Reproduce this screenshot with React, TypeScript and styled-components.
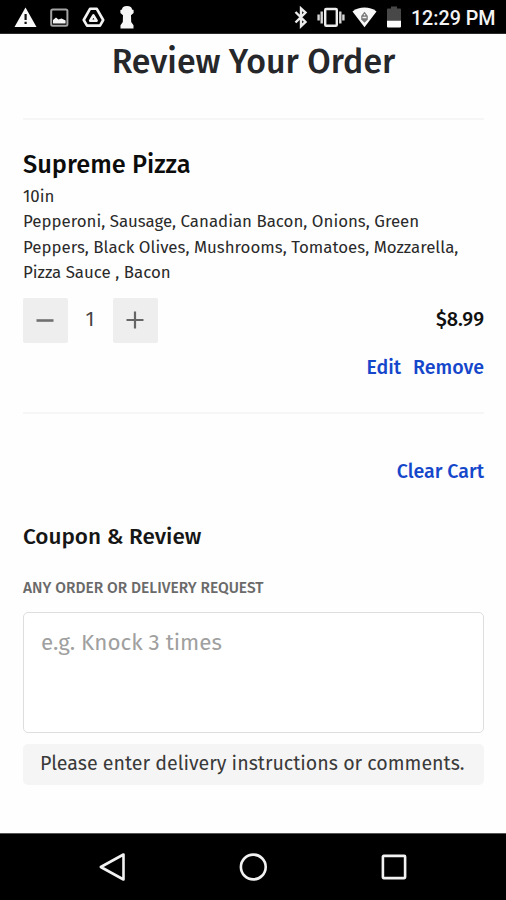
import React from "react";
import styled, { createGlobalStyle } from "styled-components";

const sans = `"Fira Sans", "Noto Sans CJK SC", "Noto Sans", sans-serif`;

const GlobalStyle = createGlobalStyle`
  *, *::before, *::after { box-sizing: border-box; }
  body { margin: 0; background: #fefefe; font-family: ${sans}; }
`;

const Screen = styled.div`
  display: flex;
  flex-direction: column;
  width: 506px;
  height: 900px;
  overflow: hidden;
  background: #fefefe;
`;

const StatusBar = styled.header`
  display: flex;
  flex: none;
  justify-content: space-between;
  height: 34px;
  padding: 0 10.5px 0 14px;
  background: #000;
  border-bottom: 1px solid #2b2b2b;
`;

const StatusGroup = styled.div`
  display: flex;
  align-items: flex-start;
`;

const StatusIcon = styled.svg<{ $before?: number }>`
  flex: none;
  display: block;
  height: 34px;
  margin-left: ${(p) => p.$before ?? 0}px;
`;

const Clock = styled.span`
  margin-left: 10px;
  color: #f4f4f4;
  font: 500 19.7px/37px Roboto, sans-serif;
`;

const Page = styled.main`
  flex: 1;
  min-height: 0;
  padding: 7px 22px 0 23px;
`;

const Title = styled.h1`
  margin: 0;
  color: #26272b;
  text-align: center;
  font-size: 33.9px;
  font-weight: 500;
  line-height: 42px;
`;

const Rule = styled.hr<{ $top: number }>`
  height: 2px;
  margin: ${(p) => p.$top}px 0 0;
  border: 0;
  background: #f6f6f6;
`;

const ItemName = styled.h2`
  margin: 25px 0 0;
  color: #0c0c0c;
  font-size: 25.4px;
  font-weight: 500;
  line-height: 39px;
`;

const ItemDetails = styled.div`
  color: #2a2a2a;
  font-size: 16.87px;
  line-height: 25.3px;
`;

const QuantityRow = styled.div`
  display: flex;
  align-items: center;
  height: 45px;
  margin-top: 13px;
`;

const StepButton = styled.button`
  display: grid;
  place-items: center;
  width: 45px;
  height: 45px;
  padding: 0 1px 1px 0;
  border: 0;
  border-radius: 2px;
  background: #eee;
`;

const Quantity = styled.span`
  width: 45px;
  padding: 0 1px 3px 0;
  color: #444;
  text-align: center;
  font-size: 20.5px;
  line-height: 26px;
`;

const Price = styled.span`
  margin-left: auto;
  padding-bottom: 4px;
  color: #111;
  font-size: 19.9px;
  font-weight: 500;
  line-height: 26px;
`;

const LinkRow = styled.div<{ $top: number }>`
  display: flex;
  justify-content: flex-end;
  gap: 12px;
  margin-top: ${(p) => p.$top}px;
`;

const TextLink = styled.a`
  color: #1547cb;
  font-size: 19.6px;
  font-weight: 500;
  line-height: 26px;
`;

const SectionTitle = styled.h3`
  margin: 37px 0 0;
  color: #161616;
  font-size: 22.5px;
  font-weight: 500;
  line-height: 30px;
`;

const FieldLabel = styled.label`
  display: block;
  margin-top: 26px;
  color: #6a6a6a;
  font-size: 15.5px;
  font-weight: 500;
  line-height: 20px;
`;

const RequestField = styled.textarea`
  display: block;
  width: 100%;
  height: 121px;
  margin-top: 14px;
  padding: 15px 17px;
  border: 1.5px solid #dedede;
  border-radius: 5px;
  background: #fff;
  resize: none;
  outline: none;
  font: 400 22.4px/30px ${sans};

  &::placeholder {
    color: #a0a0a0;
    opacity: 1;
  }
`;

const Hint = styled.p`
  height: 41px;
  margin: 11px 0 0;
  padding: 0 17px;
  border-radius: 5px;
  background: #f5f5f5;
  color: #3a3a3a;
  white-space: nowrap;
  font-size: 19.63px;
  line-height: 39px;
`;

const NavBar = styled.nav`
  display: grid;
  grid-template-columns: repeat(3, 140.5px);
  flex: none;
  justify-content: center;
  justify-items: center;
  align-items: center;
  height: 67px;
  background: #000;
  border-top: 1px solid #555;
`;

const NavIcon = styled.svg`
  display: block;
  fill: none;
  stroke: #f2f2f2;
  stroke-width: 2.6;
`;

export default function App() {
  return (
    <Screen>
      <GlobalStyle />
      <StatusBar>
        <StatusGroup>
          <StatusIcon width="23" viewBox="0 0 23 34">
            <path d="M11.5 7.5 22.5 27H.5Z" fill="#fafafa" />
            <path d="M10.5 14h2.2v6h-2.2zM10.5 21.8h2.2V24h-2.2z" fill="#111" />
          </StatusIcon>
          <StatusIcon $before={13} width="19" viewBox="0 0 19 34">
            <rect x="1.2" y="9.5" width="16.2" height="16.2" rx="1.5" fill="none" stroke="#a3a3a3" strokeWidth="2" />
            <path d="M3 23.5v-3.5l3-2.4 2.4 2 3.2-1 4 2v2.900Z" fill="#f5f5f5" />
          </StatusIcon>
          <StatusIcon $before={13} width="23" viewBox="0 0 23 34">
            <path d="M8 8.8h6.8L21.2 20 18 25.6H5L1.7 20Z" fill="none" stroke="#f3f3f3" strokeWidth="2.6" strokeLinejoin="round" />
            <path d="M11.4 15.300 14.600 20.700H8.200Z" fill="none" stroke="#f3f3f3" strokeWidth="2.6" strokeLinejoin="round" />
          </StatusIcon>
          <StatusIcon $before={15} width="14" viewBox="0 0 14 34">
            <path d="M7 6c3.4 0 5 1.600 5 3.400l1.600.6v3L11 15.300 11.200 22l2.300 3.200v3.400H.5v-3.400L2.800 22 3 15.300.4 13v-3L2 9.400C2 7.600 3.600 6 7 6Z" fill="#f6f6f6" />
          </StatusIcon>
        </StatusGroup>
        <StatusGroup>
          <StatusIcon width="14" viewBox="0 0 14 34">
            <path d="M1.500 12 11.500 22 7 26.200V8.400L11.500 12.500 1.500 22.500" fill="none" stroke="#ececec" strokeWidth="2.400" />
          </StatusIcon>
          <StatusIcon $before={9} width="28" viewBox="0 0 28 34">
            <rect x="8.200" y="9" width="11.600" height="16.800" rx="1" fill="none" stroke="#ededed" strokeWidth="2.400" />
            <path d="M4.700 11.500v12M23.300 11.500v12M1.600 14.500v6M26.400 14.500v6" stroke="#d6d6d6" strokeWidth="2.400" />
          </StatusIcon>
          <StatusIcon $before={6.5} width="25" viewBox="0 0 25 34">
            <path d="M.5 11.5C4 8.500 8 7.500 12.500 7.500s8.500 1 12 4L12.500 27.300Z" fill="#f8f8f8" />
            <path d="M12.500 11.800 15.800 16v3.400l-3.300 3.300-3.300-3.300V16Z" fill="#777" />
            <path d="M10.500 17.500h4M12.500 14v1.500" stroke="#eee" strokeWidth="1.400" />
          </StatusIcon>
          <StatusIcon $before={10} width="14" viewBox="0 0 14 34">
            <path d="M0 9.500a1 1 0 0 1 1-1h3V6.500h6v2h3a1 1 0 0 1 1 1V21H0Z" fill="#484848" />
            <path d="M0 20.800h14v5.700a1 1 0 0 1-1 1H1a1 1 0 0 1-1-1Z" fill="#fcfcfc" />
          </StatusIcon>
          <Clock>12:29 PM</Clock>
        </StatusGroup>
      </StatusBar>

      <Page>
        <Title>Review Your Order</Title>
        <Rule $top={35} />
        <ItemName>Supreme Pizza</ItemName>
        <ItemDetails>
          10in
          <br />
          Pepperoni, Sausage, Canadian Bacon, Onions, Green Peppers, Black Olives, Mushrooms, Tomatoes, Mozzarella, Pizza
          Sauce , Bacon
        </ItemDetails>
        <QuantityRow>
          <StepButton aria-label="Decrease quantity">
            <svg width="18" height="18" viewBox="0 0 18 18">
              <path d="M.5 9.500h17" stroke="#707070" strokeWidth="2.600" />
            </svg>
          </StepButton>
          <Quantity>1</Quantity>
          <StepButton aria-label="Increase quantity">
            <svg width="18" height="18" viewBox="0 0 18 18">
              <path d="M.5 9h17M9 .5v17" stroke="#666" strokeWidth="2.200" />
            </svg>
          </StepButton>
          <Price>$8.99</Price>
        </QuantityRow>
        <LinkRow $top={12}>
          <TextLink>Edit</TextLink>
          <TextLink>Remove</TextLink>
        </LinkRow>
        <Rule $top={31} />
        <LinkRow $top={45}>
          <TextLink>Clear Cart</TextLink>
        </LinkRow>
        <SectionTitle>Coupon &amp; Review</SectionTitle>
        <FieldLabel htmlFor="request">ANY ORDER OR DELIVERY REQUEST</FieldLabel>
        <RequestField id="request" placeholder="e.g. Knock 3 times" />
        <Hint>Please enter delivery instructions or comments.</Hint>
      </Page>

      <NavBar>
        <NavIcon width="30" height="30" viewBox="0 0 30 30">
          <path d="M25.500 2.500v25L2.800 15Z" strokeLinejoin="round" />
        </NavIcon>
        <NavIcon width="28" height="28" viewBox="0 0 28 28">
          <circle cx="14.300" cy="14" r="12.400" />
        </NavIcon>
        <NavIcon width="26" height="26" viewBox="0 0 26 26">
          <rect x="1.900" y="1.900" width="22.200" height="22.200" rx=".8" />
        </NavIcon>
      </NavBar>
    </Screen>
  );
}
